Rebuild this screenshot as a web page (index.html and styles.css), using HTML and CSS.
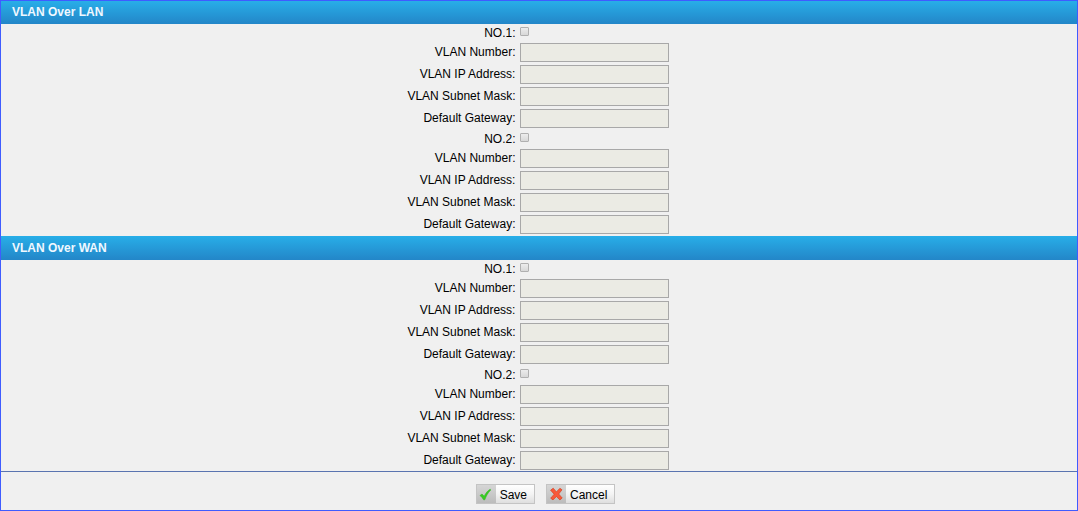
FILE: index.html
```html
<!DOCTYPE html>
<html lang="en">
<head>
<meta charset="utf-8">
<title>VLAN</title>
<link rel="stylesheet" href="styles.css">
</head>
<body>
<form class="panel">
  <section>
    <h2 class="bar">VLAN Over LAN</h2>
    <div class="row check-row"><label for="l1">NO.1:</label><input class="check" type="checkbox" id="l1"></div>
    <div class="row"><label for="l1n">VLAN Number:</label><input class="field" type="text" id="l1n" disabled></div>
    <div class="row"><label for="l1i">VLAN IP Address:</label><input class="field" type="text" id="l1i" disabled></div>
    <div class="row"><label for="l1m">VLAN Subnet Mask:</label><input class="field" type="text" id="l1m" disabled></div>
    <div class="row"><label for="l1g">Default Gateway:</label><input class="field" type="text" id="l1g" disabled></div>
    <div class="row check-row"><label for="l2">NO.2:</label><input class="check" type="checkbox" id="l2"></div>
    <div class="row"><label for="l2n">VLAN Number:</label><input class="field" type="text" id="l2n" disabled></div>
    <div class="row"><label for="l2i">VLAN IP Address:</label><input class="field" type="text" id="l2i" disabled></div>
    <div class="row"><label for="l2m">VLAN Subnet Mask:</label><input class="field" type="text" id="l2m" disabled></div>
    <div class="row"><label for="l2g">Default Gateway:</label><input class="field" type="text" id="l2g" disabled></div>
  </section>
  <section>
    <h2 class="bar">VLAN Over WAN</h2>
    <div class="row check-row"><label for="w1">NO.1:</label><input class="check" type="checkbox" id="w1"></div>
    <div class="row"><label for="w1n">VLAN Number:</label><input class="field" type="text" id="w1n" disabled></div>
    <div class="row"><label for="w1i">VLAN IP Address:</label><input class="field" type="text" id="w1i" disabled></div>
    <div class="row"><label for="w1m">VLAN Subnet Mask:</label><input class="field" type="text" id="w1m" disabled></div>
    <div class="row"><label for="w1g">Default Gateway:</label><input class="field" type="text" id="w1g" disabled></div>
    <div class="row check-row"><label for="w2">NO.2:</label><input class="check" type="checkbox" id="w2"></div>
    <div class="row"><label for="w2n">VLAN Number:</label><input class="field" type="text" id="w2n" disabled></div>
    <div class="row"><label for="w2i">VLAN IP Address:</label><input class="field" type="text" id="w2i" disabled></div>
    <div class="row"><label for="w2m">VLAN Subnet Mask:</label><input class="field" type="text" id="w2m" disabled></div>
    <div class="row"><label for="w2g">Default Gateway:</label><input class="field" type="text" id="w2g" disabled></div>
  </section>
  <footer class="actions">
    <button class="btn" type="button">
      <span class="icon"><svg width="14" height="14" viewBox="0 0 14 14" aria-hidden="true"><path d="M1 8.500 3 7 5.200 9.200C6.800 6 8.600 3.700 11.200 2.200L11.800 3C9 5.700 7.300 8.800 5.800 12.800H4.600C3.700 11.200 2.500 9.800 1 8.500Z" fill="#38cc22" stroke="#2fb31f" stroke-width=".5"/></svg></span>
      <span class="text">Save</span>
    </button>
    <button class="btn" type="button">
      <span class="icon"><svg width="14" height="14" viewBox="0 0 14 14" aria-hidden="true"><path d="M.6 3.200 3.200 1.200 6.400 4.900 9.900 1.300 12 2.800 8.700 7 12.200 11 9.900 12.900 6.400 9.500 3 12.900.7 11.200 4.200 7.200Z" fill="#f8583a" stroke="#d8401c" stroke-width=".7" stroke-linejoin="round"/></svg></span>
      <span class="text">Cancel</span>
    </button>
  </footer>
</form>
</body>
</html>
```
FILE: styles.css
```css
* {
  box-sizing: border-box;
}

body {
  margin: 0;
  background: #f0f0f0;
  color: #000;
  font: 12px/20px "Liberation Sans", Arial, sans-serif;
}

.panel {
  display: flex;
  flex-direction: column;
  min-height: 100vh;
  border: 1px solid #3f5cff;
}

.bar {
  margin: 0;
  padding: 2px 11px;
  background: linear-gradient(#28aee8, #2386c8);
  color: #f0f8ff;
  font-size: 12px;
  line-height: 20px;
}

section:first-child .bar {
  padding-top: 1px;
}

.row {
  display: grid;
  grid-template-columns: 48% 1fr;
  column-gap: 3px;
  align-items: start;
  height: 22px;
}

.row label {
  padding-right: 2px;
  text-align: right;
}

.check-row {
  height: 18px;
  line-height: 18px;
}

.field {
  width: 149px;
  height: 19px;
  margin: 1px 0 0;
  padding: 1px 2px;
  border: 1px solid #a8a8a8;
  background: #ebebe4;
  font: inherit;
}

.check {
  appearance: none;
  width: 9px;
  height: 9px;
  margin: 3px 0 0;
  border: 1px solid #b0b0b0;
  border-radius: 1px;
  background: linear-gradient(#ececec, #d8d8d8);
}

.check:checked {
  background: #2386c8;
}

.actions {
  display: flex;
  flex: 1;
  justify-content: center;
  align-items: flex-start;
  gap: 11px;
  padding: 12px 0 6px 13px;
  border-top: 1px solid #5a74b0;
  margin-top: -1px;
}

.btn {
  display: flex;
  height: 20px;
  padding: 0;
  border: 1px solid #c4c4c4;
  background: linear-gradient(#fff, #f4f4f4 50%, #dedede);
  color: #000;
  font: inherit;
  line-height: 20px;
}

.icon {
  display: flex;
  align-items: center;
  justify-content: center;
  width: 19px;
  height: 18px;
  background: linear-gradient(#d6d6d6, #bcbcbc);
}

.text {
  padding: 0 7px 0 4px;
}
```
